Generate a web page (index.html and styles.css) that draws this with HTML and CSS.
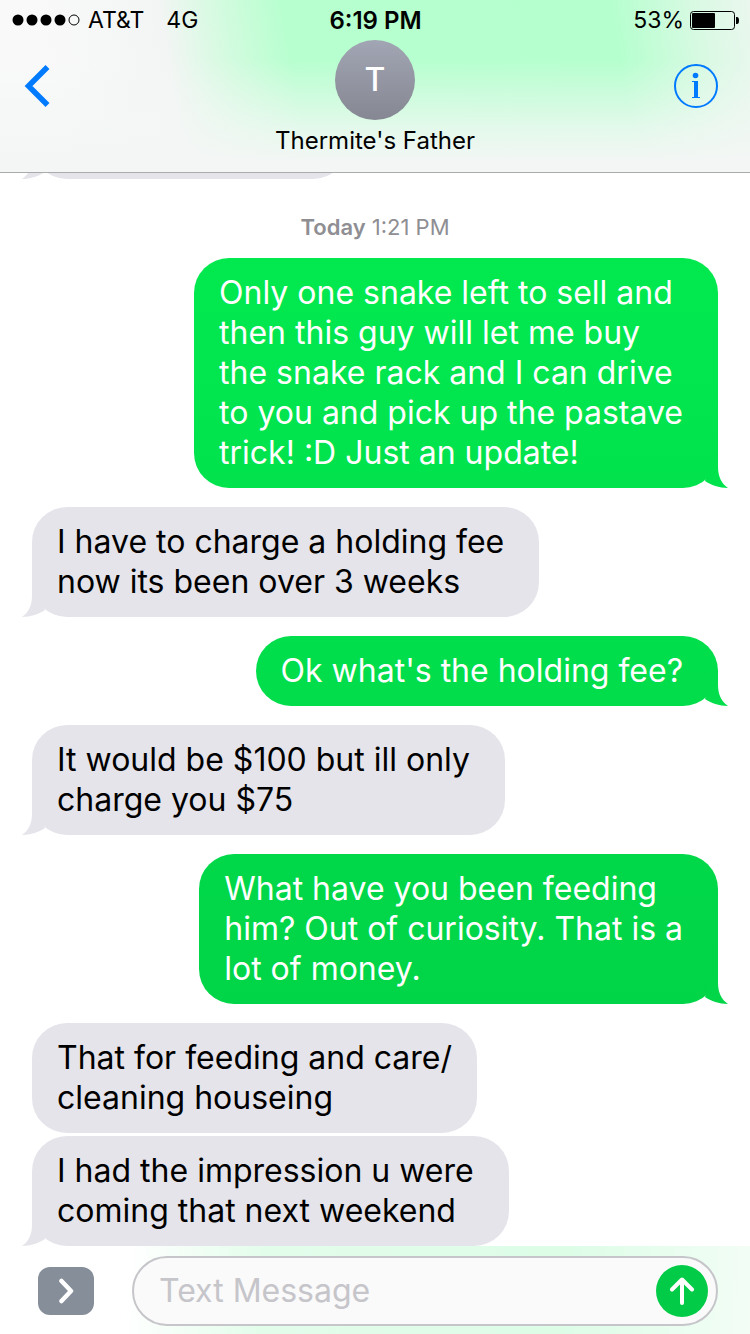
FILE: index.html
```html
<!DOCTYPE html>
<html lang="en">
<head>
  <meta charset="UTF-8">
  <meta name="viewport" content="width=device-width, initial-scale=1">
  <title>Messages</title>
  <link rel="stylesheet" href="styles.css">
</head>
<body>
  <!-- shared shapes -->
  <svg class="defs" aria-hidden="true">
    <symbol id="tail" viewBox="0 0 24 36">
      <path d="M10 0V15C10 25 6 32 0 36C9 36 17 33 23 29L14 0Z"/>
    </symbol>
  </svg>

  <header>
    <div class="status-bar">
      <div class="carrier">
        <svg width="68" height="12" viewBox="0 0 68 12" aria-hidden="true">
          <circle cx="6" cy="6" r="5.5"/>
          <circle cx="20" cy="6" r="5.5"/>
          <circle cx="34" cy="6" r="5.5"/>
          <circle cx="48" cy="6" r="5.5"/>
          <circle cx="62" cy="6" r="5" fill="none" stroke="#000"/>
        </svg>
        <span>AT&amp;T</span>
        <span class="network">4G</span>
      </div>
      <div class="time">6:19 PM</div>
      <div class="battery">
        <span>53%</span>
        <svg width="49" height="20" viewBox="0 0 49 20" aria-hidden="true">
          <rect x=".5" y="1.5" width="44" height="18" rx="3" fill="none" stroke="#000"/>
          <rect x="2" y="3" width="23" height="15" rx="1"/>
          <path d="M46 7h1q2 0 2 3.500t-2 3.500h-1z"/>
        </svg>
      </div>
    </div>

    <nav>
      <button class="back" aria-label="Back">
        <svg width="26" height="42" viewBox="0 0 26 42"><path d="M23.500 2 4.500 21 23.500 40" fill="none" stroke="#007aff" stroke-width="5.500"/></svg>
      </button>
      <div class="contact">
        <div class="avatar">T</div>
        <h1>Thermite's Father</h1>
      </div>
      <button class="info" aria-label="Details">
        <svg width="44" height="44" viewBox="0 0 44 44" fill="#007aff">
          <circle cx="22" cy="22" r="21" fill="none" stroke="#007aff" stroke-width="2"/>
          <circle cx="21.500" cy="11.500" r="2.800"/>
          <path d="M18 17h6v16h2v1h-8v-1h2V18h-2z"/>
        </svg>
      </button>
    </nav>
  </header>

  <main>
    <div class="bubble received earlier"><svg class="tail"><use href="#tail"/></svg></div>
    <p class="stamp"><b>Today</b> 1:21 PM</p>
    <div class="bubble sent">Only one snake left to sell and<br>then this guy will let me buy<br>the snake rack and I can drive<br>to you and pick up the pastave<br>trick! :D Just an update!<svg class="tail bright"><use href="#tail"/></svg></div>
    <div class="bubble received">I have to charge a holding fee<br>now its been over 3 weeks<svg class="tail"><use href="#tail"/></svg></div>
    <div class="bubble sent">Ok what's the holding fee?<svg class="tail medium"><use href="#tail"/></svg></div>
    <div class="bubble received">It would be $100 but ill only<br>charge you $75<svg class="tail"><use href="#tail"/></svg></div>
    <div class="bubble sent">What have you been feeding<br>him? Out of curiosity. That is a<br>lot of money.<svg class="tail deep"><use href="#tail"/></svg></div>
    <div class="bubble received snug">That for feeding and care/<br>cleaning houseing</div>
    <div class="bubble received grouped">I had the impression u were<br>coming that next weekend<svg class="tail"><use href="#tail"/></svg></div>
  </main>

  <footer>
    <button class="expand" aria-label="More">
      <svg width="16" height="26" viewBox="0 0 16 26"><path d="M3.500 3 13 13 3.500 23" fill="none" stroke="#fff" stroke-width="4.500" stroke-linecap="round" stroke-linejoin="round"/></svg>
    </button>
    <form class="composer">
      <input type="text" placeholder="Text Message" aria-label="Text Message">
      <button type="button" class="send" aria-label="Send">
        <svg width="26" height="28" viewBox="0 0 26 28"><path d="M13 26V3M3 12.500 13 2.500 23 12.500" fill="none" stroke="#fff" stroke-width="4" stroke-linecap="round" stroke-linejoin="round"/></svg>
      </button>
    </form>
  </footer>
</body>
</html>
```

FILE: styles.css
```css
* {
  box-sizing: border-box;
}
body {
  margin: 0;
  height: 100vh;
  display: flex;
  flex-direction: column;
  font-family: Inter, "Liberation Sans", sans-serif;
  color: #000;
  background: #fff;
}
button {
  padding: 0;
  border: none;
  background: none;
  cursor: pointer;
}
svg {
  display: block;
}
.defs {
  position: absolute;
  width: 0;
  height: 0;
}

/* top bar */
header {
  flex: none;
  border-bottom: 1px solid #a9abac;
  background:
    linear-gradient(rgba(244, 247, 246, 0) 35%, rgba(243, 247, 245, 0.75) 75%, #f4f6f5 95%),
    linear-gradient(80deg, #f9f9fa 8%, #f3f5f4 24%, #d3fbdf 32%, #b7ffcf 40%, #b5ffce 82%, #dcf9e5 94%, #eaf7ee 100%);
}
.status-bar {
  display: grid;
  grid-template-columns: 1fr auto 1fr;
  align-items: center;
  height: 40px;
  padding: 0 11px 0 12px;
  font-size: 23px;
}
.carrier, .battery {
  display: flex;
  align-items: center;
  gap: 8px;
}
.network {
  margin-left: 14px;
}
.time {
  font-size: 24px;
  font-weight: 600;
}
.battery {
  justify-content: flex-end;
  gap: 6px;
}
nav {
  display: grid;
  grid-template-columns: 1fr auto 1fr;
  align-items: start;
  height: 132px;
  padding: 0 24px;
}
.back {
  justify-self: start;
  margin-top: 25px;
}
.info {
  justify-self: end;
  margin: 24px 8px 0 0;
}
.contact {
  display: flex;
  flex-direction: column;
  align-items: center;
}
.avatar {
  width: 80px;
  height: 80px;
  border-radius: 50%;
  background: linear-gradient(#a2a5b3, #858792);
  color: #fff;
  font-size: 32px;
  font-weight: 500;
  line-height: 80px;
  text-align: center;
}
h1 {
  margin: 6px 0 0;
  font-size: 24px;
  font-weight: 400;
  line-height: 30px;
}

/* conversation */
main {
  flex: 1;
  min-height: 0;
  display: flex;
  flex-direction: column;
  justify-content: flex-end;
  align-items: flex-start;
  padding: 0 32px;
  overflow: hidden;
}
.bubble {
  position: relative;
  flex: none;
  min-height: 70px;
  margin-top: 19px;
  padding: 15px 35px 15px 25px;
  border-radius: 35px;
  font-size: 32px;
  line-height: 40px;
  white-space: nowrap;
}
.received {
  background: #e5e4ea;
}
.sent {
  align-self: flex-end;
  color: #fff;
  background: linear-gradient(#02f052, #00cb44) fixed;
}
.earlier {
  width: 46%;
}
.snug {
  padding-right: 25px;
}
.grouped {
  margin-top: 3px;
}
.tail {
  position: absolute;
  bottom: 0;
  left: -10px;
  width: 24px;
  height: 36px;
  fill: #e5e4ea;
}
.sent .tail {
  left: auto;
  right: -10px;
  transform: scaleX(-1);
}
.sent .bright {
  fill: #01e34d;
}
.sent .medium {
  fill: #01dd4b;
}
.sent .deep {
  fill: #01d548;
}
.stamp {
  flex: none;
  align-self: center;
  margin: 33px 0 -3px;
  color: #8e8e93;
  font-size: 22px;
  line-height: 30px;
}
.stamp b {
  font-weight: 600;
}

/* message field */
footer {
  flex: none;
  display: flex;
  align-items: center;
  gap: 38px;
  padding: 10px 32px 8px 38px;
  background: linear-gradient(95deg, #fff 17%, #e3fdeb 35%, #ddfde7 75%, #f3fdf6 100%);
}
.expand {
  flex: none;
  display: grid;
  place-items: center;
  width: 56px;
  height: 48px;
  border-radius: 12px;
  background: #858e99;
}
.composer {
  flex: 1;
  min-width: 0;
  display: flex;
  align-items: center;
  height: 70px;
  padding: 0 8px 0 25px;
  border: 2px solid #c5c5ca;
  border-radius: 35px;
  background: #fafafa;
}
.composer input {
  flex: 1;
  min-width: 0;
  padding: 0;
  border: none;
  outline: none;
  background: none;
  font: 32px/40px Inter, "Liberation Sans", sans-serif;
}
.composer input::placeholder {
  color: #c5c5ca;
  opacity: 1;
}
.send {
  flex: none;
  display: grid;
  place-items: center;
  width: 52px;
  height: 52px;
  border-radius: 50%;
  background: #02cc47;
}
```
